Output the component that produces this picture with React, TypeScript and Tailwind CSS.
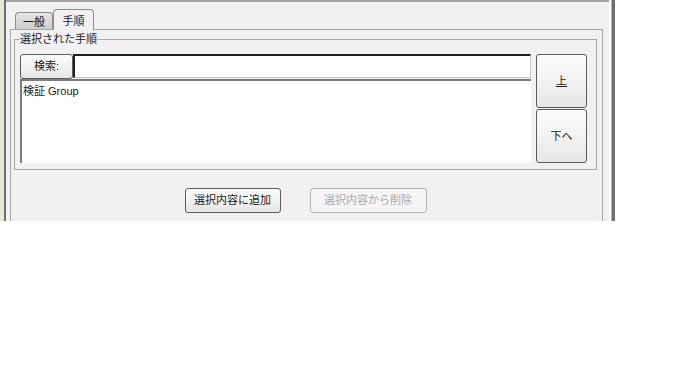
import React from "react";

const font = { fontFamily: '"Liberation Sans", "Noto Sans CJK JP", sans-serif' };

function Btn({
  children,
  className = "",
  disabled = false,
}: {
  children: React.ReactNode;
  className?: string;
  disabled?: boolean;
}) {
  return (
    <button
      disabled={disabled}
      className={
        "flex items-center justify-center rounded-[3px] border text-[11px] leading-none " +
        (disabled
          ? "border-[#b4b4b4] bg-[#f6f4f6] text-[#a9a9a9] "
          : "border-[#5c5c5c] bg-gradient-to-b from-[#fbfbfb] via-[#f2f2f2] to-[#e6e6e6] text-[#1a1a1a] ") +
        className
      }
    >
      {children}
    </button>
  );
}

export default function App() {
  return (
    <div className="w-[685px] h-[388px] bg-white" style={font}>
      <div className="flex w-[615px] h-[221px]">
        <div className="w-[4px] bg-[#e7e6da]" />
        <div className="w-[2px] bg-[#6f6f6f]" />

        {/* main window area */}
        <div className="w-[603px] overflow-hidden border-t-2 border-[#a4a4a4] bg-[#f3f0f3] pl-[4px] pt-[7px]">
          {/* tabs */}
          <div className="flex h-[20px] items-end pl-[5px]">
            <div className="flex h-[17px] w-[38px] items-center justify-center rounded-t-[4px] border border-b-0 border-[#8c8c8c] bg-gradient-to-b from-[#e4e4e4] to-[#cdcdcd] pt-[2px] text-[11px] text-[#1a1a1a]">
              一般
            </div>
            <div className="relative z-10 -mb-px flex h-[21px] w-[41px] items-start justify-center rounded-t-[4px] border border-b-0 border-[#8c8c8c] bg-[#f3f0f3] pt-[3px] text-[11px] text-[#1a1a1a]">
              手順
            </div>
          </div>

          {/* tab panel */}
          <div className="h-[200px] w-[593px] border border-b-0 border-[#a6a6a6] pl-[3px] pt-[4px]">
            <fieldset className="w-[583px] border border-[#a9a9a9] px-[5px] pb-[6px] pr-[8px] pt-[9px]">
              <legend className="text-[11px] leading-[11px] text-[#1a1a1a]">
                選択された手順
              </legend>
              <div className="flex gap-[5px]">
                <div className="flex w-[511px] flex-col">
                  <div className="flex h-[25px]">
                    <Btn className="h-[25px] w-[53px]">検索:</Btn>
                    <input
                      className="h-[24px] flex-1 border-b border-l-2 border-r border-t-2 border-b-[#c4c4c4] border-l-[#202020] border-r-[#c4c4c4] border-t-[#202020] bg-white outline-none"
                      defaultValue=""
                    />
                  </div>
                  <div className="h-[84px] border-l-2 border-t-2 border-[#7c7c7c] bg-white px-[1px] pt-[4px] text-[11px] leading-[13px] text-[#1a1a1a]">
                    検証 Group
                  </div>
                </div>
                <div className="flex w-[51px] flex-col gap-[1px]">
                  <Btn className="h-[54px] w-[51px]">
                    <span className="underline">上</span>
                  </Btn>
                  <Btn className="h-[54px] w-[51px]">下へ</Btn>
                </div>
              </div>
            </fieldset>

            <div className="mt-[18px] flex w-[583px] justify-center gap-[29px]">
              <Btn className="h-[25px] w-[96px]">選択内容に追加</Btn>
              <Btn className="h-[25px] w-[117px]" disabled>
                選択内容から削除
              </Btn>
            </div>
          </div>
        </div>

        <div className="w-[2px] bg-white" />
        <div className="w-[1px] bg-[#b4b4b4]" />
        <div className="w-[3px] bg-[#707070]" />
      </div>
    </div>
  );
}
